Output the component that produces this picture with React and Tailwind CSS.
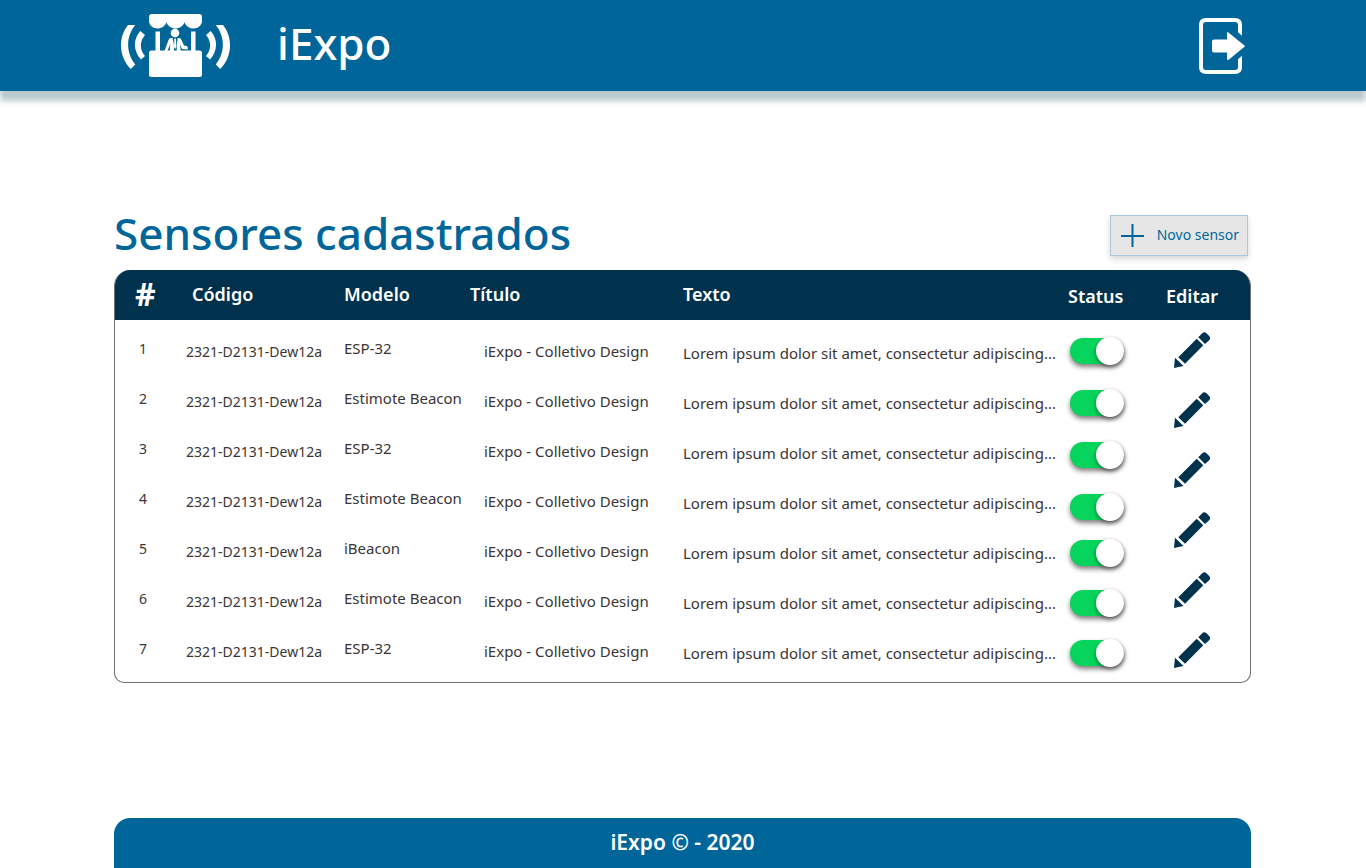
const codes = '2321-D2131-Dew12a';
const title = 'iExpo - Colletivo Design';
const text = 'Lorem ipsum dolor sit amet, consectetur adipiscing...';
const models = ['ESP-32', 'Estimote Beacon', 'ESP-32', 'Estimote Beacon', 'iBeacon', 'Estimote Beacon', 'ESP-32'];
const sensors = models.map((model, i) => ({ id: i + 1, code: codes, model, title, text }));

function Waves() {
  return (
    <>
      <path d="M8 12H15.300C5.500 24 6 40 15.300 51.500L10.800 56C-1.800 43-1.800 24 8 12Z" />
      <path d="M20.300 18L25 22C19.500 28 19.500 37 25 43L21 46.500C13 38 13 26 20.300 18Z" />
    </>
  );
}

function Logo() {
  return (
    <svg className="h-16 w-[111px]" viewBox="0 0 111 64" fill="white" aria-hidden="true">
      <Waves />
      <g transform="translate(111 0) scale(-1 1)">
        <Waves />
      </g>
      <path d="M32 1H79Q82 1 82 4V8C82 12 78 15.500 73.500 15.500C69.500 15.500 65.500 13 64.500 9C63.500 13 59.500 15.500 55.500 15.500C51.500 15.500 47.500 13 46.500 9C45.500 13 41.500 15.500 37.500 15.500C33 15.500 29 12 29 8V4Q29 1 32 1Z" />
      <path d="M35.500 18.500H40V39H35.500ZM71 18.500H75.500V39H71Z" />
      <rect x="29" y="37.500" width="53" height="26.500" rx="2.500" />
      <circle cx="55" cy="20" r="4.300" />
      <path d="M50.500 25H52.500L54 32V38H49.800L50.300 31L47.500 38H44.500L48.500 27Q49 25.300 50.500 25Z" />
      <path d="M54.300 25.500H55.900L56.400 34L55.200 36L54.100 34Z" />
      <path d="M57.700 25H59.500Q61 25.300 61.500 27L64 32.500L67 33Q68.500 34.500 67.500 36.500L62 36L60 31.500L60.800 38H56.800V32Z" />
    </svg>
  );
}

function ExitIcon() {
  return (
    <svg className="h-14 w-12" viewBox="0 0 48 56" aria-hidden="true">
      <path d="M42 20V7Q42 2 37 2H8Q3 2 3 7V49Q3 54 8 54H37Q42 54 42 49V36" fill="none" stroke="white" strokeWidth="4" />
      <path d="M38 12.500L46 19.500V36L38 43Z" fill="#006699" />
      <path d="M16 21.500H29V15.500Q29 13 31 15L46.500 27.500Q47.500 28 46.500 28.700L31 41.500Q29 43 29 40.500V34.500H16Q14 34.500 14 32.500V23.500Q14 21.500 16 21.500Z" fill="white" />
    </svg>
  );
}

function Pencil() {
  return (
    <svg className="size-9" viewBox="0 0 36 36" fill="#00324d" aria-hidden="true">
      <path d="M0 36L1 25.700L9.500 34Z" />
      <path d="M22.700 6.800L29.300 13.300L11 31.700L4.300 25.200Z" />
      <path d="M24.300 5.300L28 1.400Q30 -0.900 32.200 1L35.200 4Q37 6 35.200 8.200L31 12Z" />
    </svg>
  );
}

function Toggle({ id }) {
  return (
    <input
      type="checkbox"
      role="switch"
      defaultChecked
      aria-label={`Status do sensor ${id}`}
      className="my-px block h-[26px] w-[54px] cursor-pointer appearance-none rounded-full bg-[#a3a3a3] shadow-[0_3px_5px_rgba(0,0,0,0.5)] checked:bg-[#06d45c] before:-mt-px before:block before:size-7 before:rounded-full before:bg-white before:shadow-[0_2px_4px_rgba(0,0,0,0.45)] checked:before:ml-auto"
    />
  );
}

export default function App() {
  return (
    <div className="flex min-h-screen flex-col bg-white font-['Noto_Sans',sans-serif] text-[#3b3536]">
      <header className="flex h-[91px] items-center justify-between bg-[#006699] px-[120px] shadow-[0_10px_6px_rgba(0,50,77,0.27)]">
        <a href="#" className="flex items-center gap-[46px] pb-0.5 text-white">
          <Logo />
          <span className="pb-1 text-[44px] leading-none font-medium">iExpo</span>
        </a>
        <button type="button" aria-label="Sair" className="cursor-pointer">
          <ExitIcon />
        </button>
      </header>

      <main className="grow pt-[120px] pr-[115px] pb-12 pl-[114px]">
        <div className="flex items-center justify-between pr-[3px]">
          <h1 className="pb-1 text-[44px] leading-[44px] font-medium text-[#006699]">Sensores cadastrados</h1>
          <button
            type="button"
            className="flex h-[41px] w-[138px] cursor-pointer items-center justify-between border border-[#a9c8dc] bg-[#e6e6e6] pr-2 pl-2.5 text-sm text-[#006699] shadow-[0_3px_6px_rgba(0,0,0,0.16)]"
          >
            <svg className="size-[23px]" viewBox="0 0 23 23" stroke="currentColor" strokeWidth="2" aria-hidden="true">
              <path d="M0 12H23M11.500 0V23" />
            </svg>
            Novo sensor
          </button>
        </div>

        <div className="mt-[11px] overflow-hidden rounded-t-2xl rounded-b-[10px] border border-t-0 border-[#707070] pb-3">
          <table className="w-full table-fixed text-left text-[15px] leading-5">
            <colgroup>
              <col className="w-[71px]" />
              <col className="w-[158px]" />
              <col className="w-[126px]" />
              <col className="w-[213px]" />
              <col />
              <col className="w-[98px]" />
              <col className="w-[84px]" />
            </colgroup>
            <thead className="bg-[#00324d] text-lg text-white">
              <tr className="h-[50px]">
                <th className="pb-0.5 pl-5 text-[32px] leading-none font-bold">#</th>
                <th className="pb-0.5 pl-1.5 font-semibold">Código</th>
                <th className="pb-0.5 font-semibold">Modelo</th>
                <th className="pb-0.5 font-semibold">Título</th>
                <th className="pb-0.5 font-semibold">Texto</th>
                <th className="pt-0.5 font-semibold">Status</th>
                <th className="pt-0.5 font-semibold">Editar</th>
              </tr>
            </thead>
            <tbody>
              {sensors.map((s, i) => (
                <tr key={s.id} className="h-[50px] align-top whitespace-nowrap">
                  <td className="pt-[19px] pl-6 text-sm">{s.id}</td>
                  <td className="pt-[22px] text-sm">{s.code}</td>
                  <td className="pt-[18px]">{s.model}</td>
                  <td className="pt-[21px] pl-3.5">{s.title}</td>
                  <td className="pt-[23px]">{s.text}</td>
                  {i === 0 && (
                    <>
                      <td rowSpan={7} className="pt-[17px] pl-0.5">
                        <div className="flex flex-col gap-[18px]">
                          <div className="flex flex-col gap-6">
                            {sensors.slice(0, 4).map((t) => <Toggle key={t.id} id={t.id} />)}
                          </div>
                          <div className="flex flex-col gap-[22px]">
                            {sensors.slice(4).map((t) => <Toggle key={t.id} id={t.id} />)}
                          </div>
                        </div>
                      </td>
                      <td rowSpan={7} className="pt-3 pl-2">
                        <div className="flex flex-col items-start gap-6">
                          {sensors.slice(0, 6).map((t) => (
                            <button key={t.id} type="button" aria-label={`Editar sensor ${t.id}`} className="cursor-pointer">
                              <Pencil />
                            </button>
                          ))}
                        </div>
                      </td>
                    </>
                  )}
                </tr>
              ))}
            </tbody>
          </table>
        </div>
      </main>

      <footer className="mr-[115px] ml-[114px] flex h-[50px] items-center justify-center rounded-t-2xl bg-[#006699] text-[21px] font-semibold text-white">
        iExpo © - 2020
      </footer>
    </div>
  );
}
